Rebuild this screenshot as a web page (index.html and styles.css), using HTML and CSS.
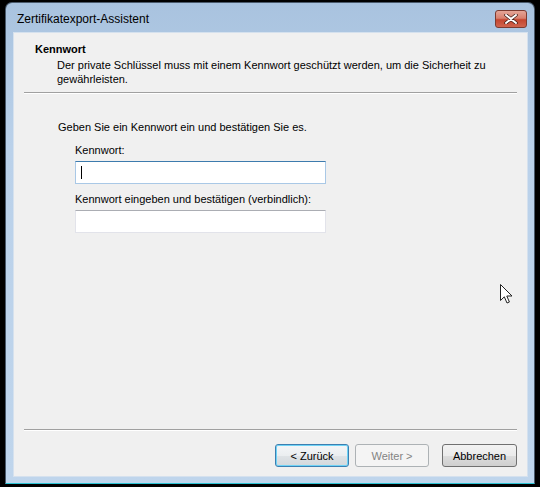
FILE: index.html
```html
<!DOCTYPE html>
<html>
<head>
  <title>Zertifikatexport-Assistent</title>
  <link rel="stylesheet" href="styles.css">
</head>
<body>
  <div class="window">
    <div class="titlebar">
      <span class="title">Zertifikatexport-Assistent</span>
      <button class="close-btn" title="Schließen">
        <svg viewBox="0 0 14 10" class="close-icon">
          <path d="M2 1 L12 9 M12 1 L2 9" stroke="#3a1a14" stroke-width="3.4" stroke-linecap="round"/>
          <path d="M2 1 L12 9 M12 1 L2 9" stroke="#fff" stroke-width="2" stroke-linecap="round"/>
        </svg>
      </button>
    </div>

    <div class="client">
      <!-- Wizard page header -->
      <div class="page-header">
        <div class="page-title">Kennwort</div>
        <div class="page-subtitle">
          Der private Schlüssel muss mit einem Kennwort geschützt werden, um die Sicherheit zu gewährleisten.
        </div>
      </div>
      <div class="separator"></div>

      <!-- Password form -->
      <div class="page-body">
        <p class="intro">Geben Sie ein Kennwort ein und bestätigen Sie es.</p>
        <div class="form-group">
          <label for="password">Kennwort:</label>
          <div class="field focused"><span class="caret"></span></div>
        </div>
        <div class="form-group">
          <label for="confirm">Kennwort eingeben und bestätigen (verbindlich):</label>
          <div class="field"></div>
        </div>
        <svg class="pointer" viewBox="0 0 13 21">
          <path d="M0.5 0.5 L0.5 16.5 L4.3 12.8 L7 19 L9.4 18 L6.8 12 L12 12 Z" fill="#fff" stroke="#222" stroke-width="1" stroke-linejoin="round"/>
        </svg>
      </div>

      <div class="separator"></div>
      <div class="button-container">
        <button class="btn default">&lt; Zurück</button>
        <button class="btn" disabled>Weiter &gt;</button>
        <button class="btn cancel">Abbrechen</button>
      </div>
    </div>
  </div>
</body>
</html>
```

FILE: styles.css
```css
body {
  margin: 0;
  width: 540px;
  height: 487px;
  overflow: hidden;
  background-color: #000;
  font-family: "Liberation Sans", Arial, sans-serif;
  font-size: 11px;
  color: #000;
}
.window {
  margin: 2px 5px 0 5px;
  width: 530px;
  height: 482px;
  box-sizing: border-box;
  padding: 0 6px 6px 7px;
  border-radius: 7px 7px 0 0;
  border: 1px solid #4a5a6c;
  border-bottom: 1px solid #2cc4d4;
  background: linear-gradient(to bottom, #a9c3df 0%, #bad1ea 30%, #bfd5ec 100%);
  display: flex;
  flex-direction: column;
}
.titlebar {
  height: 29px;
  display: flex;
  align-items: center;
  justify-content: space-between;
  padding: 0 1px 0 4px;
}
.title {
  font-size: 12px;
  color: #000;
  margin-top: 2px;
}
.close-btn {
  width: 32px;
  height: 18px;
  padding: 0;
  margin-top: 2px;
  border: 1px solid #7c3b30;
  border-radius: 3px;
  background: linear-gradient(to bottom, #e4a597 0%, #d8806e 45%, #c4452e 55%, #d0654f 100%);
  display: flex;
  align-items: center;
  justify-content: center;
}
.close-icon {
  width: 14px;
  height: 10px;
}
.client {
  flex: 1;
  background-color: #f0f0f0;
  border: 1px solid #d5e1ee;
  display: flex;
  flex-direction: column;
}
.page-header {
  padding: 10px 10px 6px 21px;
}
.page-title {
  font-weight: bold;
  margin-bottom: 3px;
}
.page-subtitle {
  padding-left: 22px;
  line-height: 14px;
  width: 440px;
}
.separator {
  height: 1px;
  margin: 0 10px 0 10px;
  background-color: #a0a0a0;
  border-bottom: 1px solid #fff;
}
.page-body {
  flex: 1;
  position: relative;
  padding: 27px 0 0 44px;
}
.intro {
  margin: 0 0 11px 0;
}
.form-group {
  padding-left: 17px;
  margin-bottom: 9px;
}
.form-group label {
  display: block;
  margin-bottom: 5px;
}
.field {
  width: 251px;
  height: 23px;
  box-sizing: border-box;
  background-color: #fff;
  border: 1px solid #e2e3ea;
  border-top-color: #abadb3;
  display: flex;
  align-items: center;
}
.field.focused {
  border-color: #a9c8e6;
  border-top-color: #3d7bad;
}
.caret {
  width: 1px;
  height: 13px;
  margin-left: 5px;
  background-color: #000;
}
.pointer {
  position: absolute;
  left: 486px;
  top: 190px;
  width: 13px;
  height: 21px;
}
.button-container {
  display: flex;
  justify-content: flex-end;
  padding: 13px 10px 9px 0;
  gap: 6px;
}
.btn {
  width: 74px;
  height: 23px;
  padding: 0;
  font-family: "Liberation Sans", Arial, sans-serif;
  font-size: 11px;
  color: #000;
  border: 1px solid #707070;
  border-radius: 3px;
  background: linear-gradient(to bottom, #f2f2f2 0%, #ebebeb 50%, #dddddd 51%, #cfcfcf 100%);
}
.btn.default {
  border-color: #3c7fb1;
  box-shadow: inset 0 0 0 1px #6fd3f6;
  background: linear-gradient(to bottom, #f4f6f8 0%, #ebeef0 50%, #dfe3e6 51%, #d3d8dc 100%);
}
.btn:disabled {
  border-color: #adb2b5;
  background: #f4f4f4;
  color: #838383;
}
.btn.cancel {
  width: 75px;
  margin-left: 7px;
}
```
